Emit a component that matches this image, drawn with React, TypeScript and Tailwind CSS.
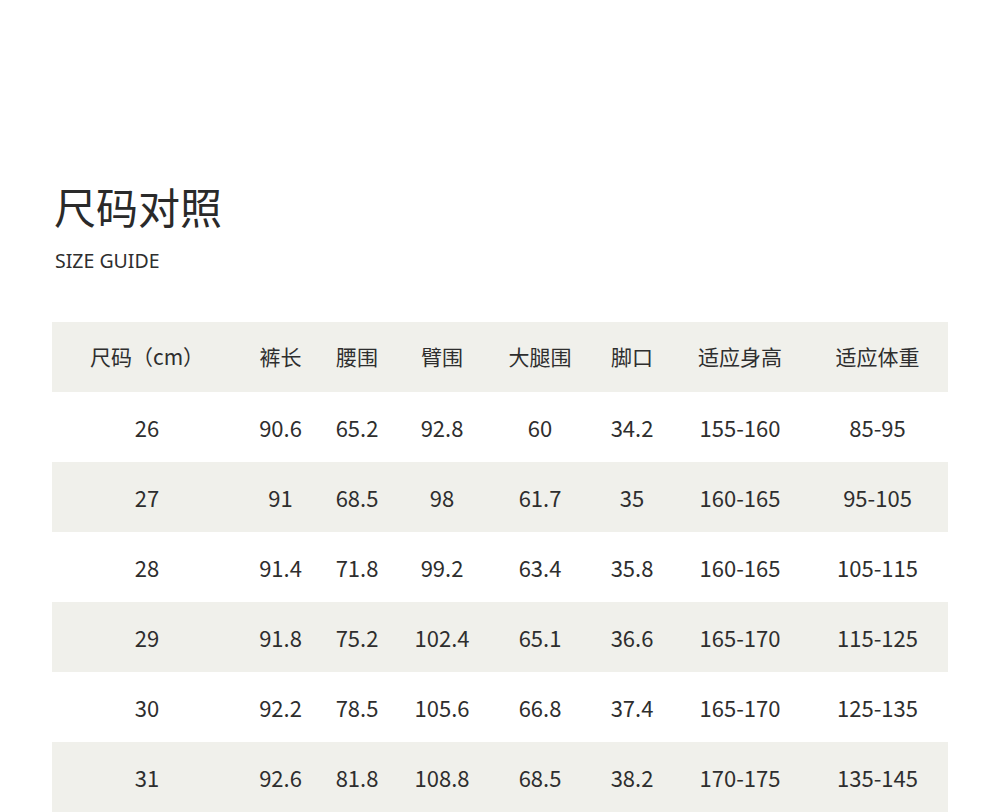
const headers = ["尺码（cm）", "裤长", "腰围", "臂围", "大腿围", "脚口", "适应身高", "适应体重"];

const widths = ["w-[190px]", "w-[77px]", "w-[76px]", "w-[94px]", "w-[102px]", "w-[82px]", "w-[134px]", "w-[141px]"];

const rows = [
  ["26", "90.6", "65.2", "92.8", "60", "34.2", "155-160", "85-95"],
  ["27", "91", "68.5", "98", "61.7", "35", "160-165", "95-105"],
  ["28", "91.4", "71.8", "99.2", "63.4", "35.8", "160-165", "105-115"],
  ["29", "91.8", "75.2", "102.4", "65.1", "36.6", "165-170", "115-125"],
  ["30", "92.2", "78.5", "105.6", "66.8", "37.4", "165-170", "125-135"],
  ["31", "92.6", "81.8", "108.8", "68.5", "38.2", "170-175", "135-145"],
];

const SizeGuide = () => {
  return (
    <div className="bg-white min-h-[812px] px-[52px] pt-[180px] text-[#2e2e2e] font-['Noto_Sans_CJK_SC','Noto_Sans',sans-serif]">
      <h1 className="text-[42px] leading-[52px] text-[#2a2a2a] pl-[2px]">尺码对照</h1>
      <p className="text-[19.5px] leading-[24px] mt-[17px] pl-[3px] font-['Noto_Sans','Noto_Sans_CJK_SC',sans-serif]">SIZE GUIDE</p>
      <table className="mt-[49px] w-[896px] table-fixed border-collapse">
        <thead>
          <tr className="bg-[#f0f0eb] h-[70px]">
            {headers.map((h, i) => (
              <th key={h} className={`${widths[i]} font-normal text-[21px] text-center p-0`}>
                {h}
              </th>
            ))}
          </tr>
        </thead>
        <tbody>
          {rows.map((r, ri) => (
            <tr key={r[0]} className={`h-[70px] ${ri % 2 === 1 ? "bg-[#f0f0eb]" : "bg-white"}`}>
              {r.map((c, ci) => (
                <td key={ci} className="text-center text-[22px] p-0">
                  {c}
                </td>
              ))}
            </tr>
          ))}
        </tbody>
      </table>
    </div>
  );
};

export default function App() {
  return <SizeGuide />;
}
